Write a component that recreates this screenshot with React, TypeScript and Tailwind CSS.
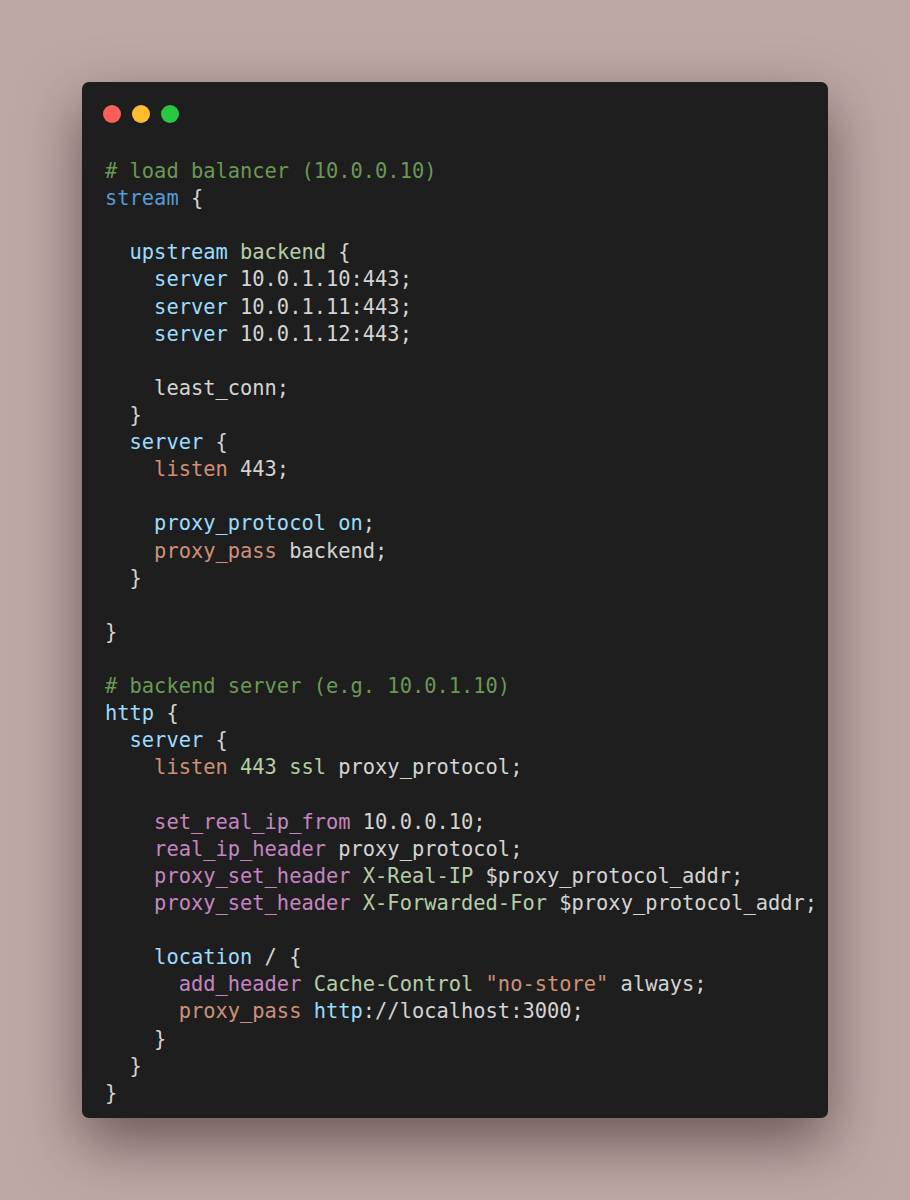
const C = {
  cm: "text-[#6a9955]",
  kw: "text-[#569cd6]",
  pr: "text-[#9cdcfe]",
  nm: "text-[#b5cea8]",
  st: "text-[#ce9178]",
  pk: "text-[#c586c0]",
  tx: "text-[#d4d4d4]",
};

type Tok = [string, string];

const lines: Tok[][] = [
  [["# load balancer (10.0.0.10)", C.cm]],
  [["stream", C.kw], [" {", C.tx]],
  [],
  [["  upstream", C.pr], [" ", C.tx], ["backend", C.nm], [" {", C.tx]],
  [["    server", C.pr], [" 10.0.1.10:443;", C.tx]],
  [["    server", C.pr], [" 10.0.1.11:443;", C.tx]],
  [["    server", C.pr], [" 10.0.1.12:443;", C.tx]],
  [],
  [["    least_conn;", C.tx]],
  [["  }", C.tx]],
  [["  server", C.pr], [" {", C.tx]],
  [["    listen", C.st], [" 443;", C.tx]],
  [],
  [["    proxy_protocol on", C.pr], [";", C.tx]],
  [["    proxy_pass", C.st], [" backend;", C.tx]],
  [["  }", C.tx]],
  [],
  [["}", C.tx]],
  [],
  [["# backend server (e.g. 10.0.1.10)", C.cm]],
  [["http", C.pr], [" {", C.tx]],
  [["  server", C.pr], [" {", C.tx]],
  [["    listen", C.st], [" ", C.tx], ["443 ssl", C.nm], [" proxy_protocol;", C.tx]],
  [],
  [["    set_real_ip_from", C.pk], [" 10.0.0.10;", C.tx]],
  [["    real_ip_header", C.pk], [" proxy_protocol;", C.tx]],
  [["    proxy_set_header", C.pk], [" ", C.tx], ["X-Real-IP", C.nm], [" $proxy_protocol_addr;", C.tx]],
  [["    proxy_set_header", C.pk], [" ", C.tx], ["X-Forwarded-For", C.nm], [" $proxy_protocol_addr;", C.tx]],
  [],
  [["    location", C.pr], [" / {", C.tx]],
  [["      add_header", C.pk], [" ", C.tx], ["Cache-Control", C.nm], [" ", C.tx], ['"no-store"', C.st], [" always;", C.tx]],
  [["      proxy_pass", C.st], [" ", C.tx], ["http", C.pr], ["://localhost:3000;", C.tx]],
  [["    }", C.tx]],
  [["  }", C.tx]],
  [["}", C.tx]],
];

export default function App() {
  return (
    <div className="w-[910px] h-[1200px] bg-[#bea8a6] pt-[82px] pl-[82px]">
      <div className="w-[746px] h-[1036px] bg-[#1e1e1e] rounded-[7px] shadow-[0_24px_60px_rgba(40,20,20,0.55)] pl-[21px] pt-[23px]">
        {/* window buttons */}
        <div className="flex gap-[11px]">
          <span className="w-[18px] h-[18px] rounded-full bg-[#ff5f57]" />
          <span className="w-[18px] h-[18px] rounded-full bg-[#febc2e]" />
          <span className="w-[18px] h-[18px] rounded-full bg-[#28c840]" />
        </div>

        <pre className="mt-[35px] pl-[2px] font-['DejaVu_Sans_Mono',monospace] text-[20.4px] leading-[27.12px] whitespace-pre">
          {lines.map((toks, i) => (
            <div key={i} className="h-[27.12px]">
              {toks.map(([t, c], j) => (
                <span key={j} className={c}>
                  {t}
                </span>
              ))}
            </div>
          ))}
        </pre>
      </div>
    </div>
  );
}
